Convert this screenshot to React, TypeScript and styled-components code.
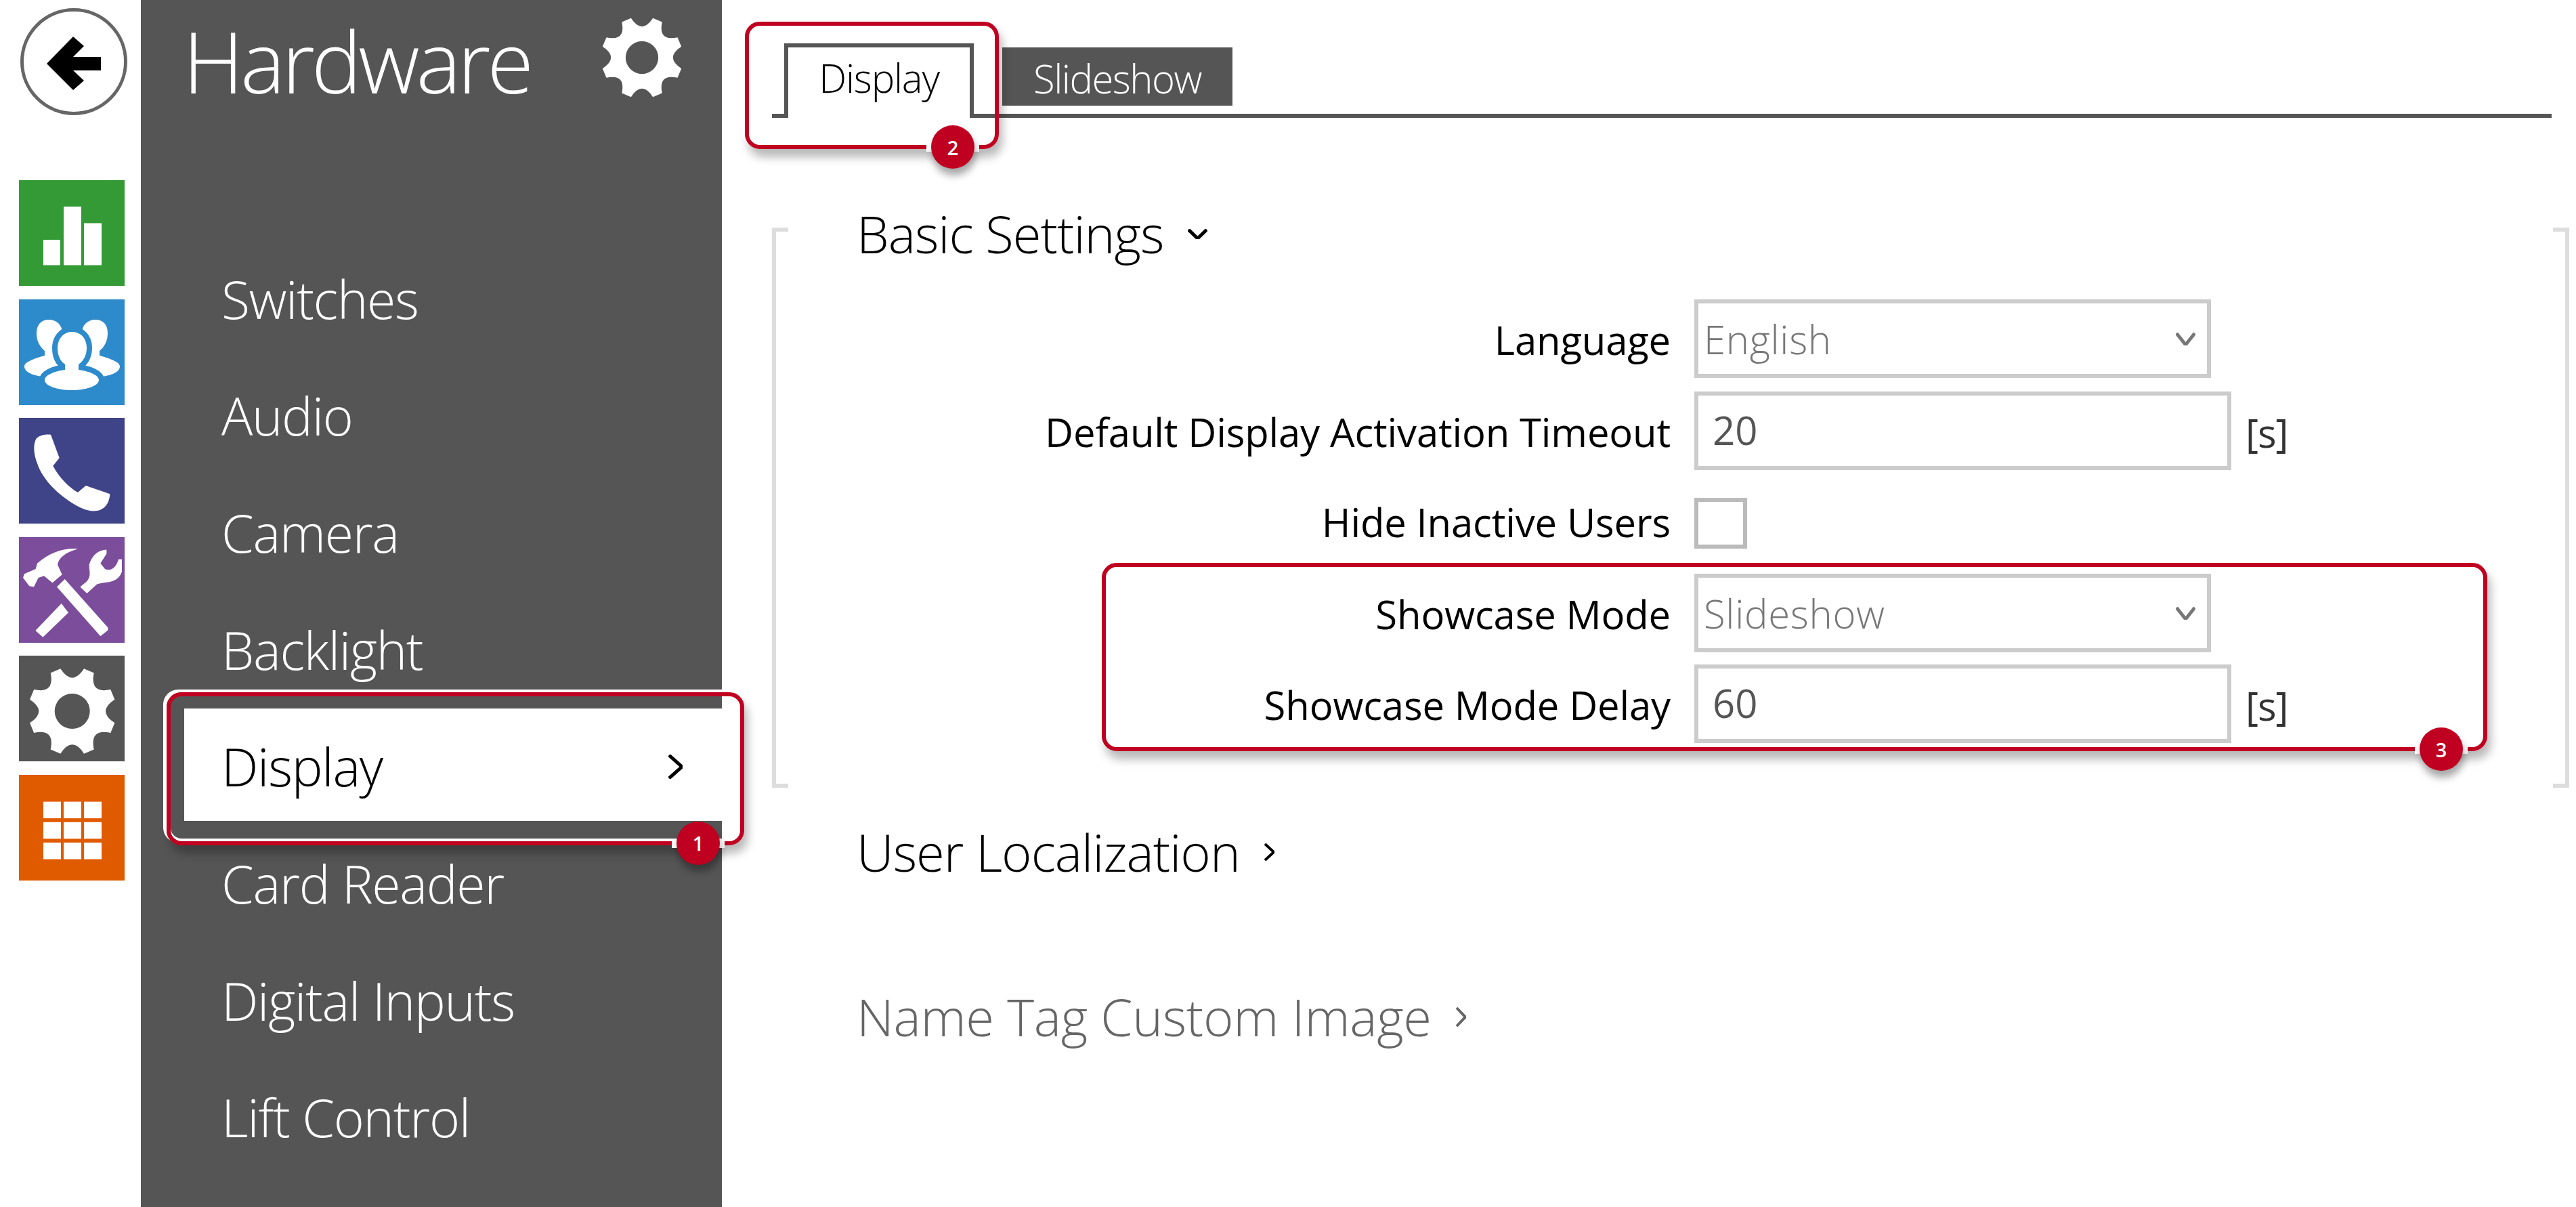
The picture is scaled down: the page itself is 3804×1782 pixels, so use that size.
import React from 'react';
import styled, { createGlobalStyle } from 'styled-components';

const GlobalStyle = createGlobalStyle`
  * { box-sizing: border-box; }
  html, body { margin: 0; padding: 0; background: #fff; }
  body { font-family: "Open Sans", "Noto Sans", sans-serif; }
`;

const Page = styled.div`
  display: flex;
  width: 3804px;
  height: 1782px;
  overflow: hidden;
`;

// left rail with the round back button and coloured tiles
const Rail = styled.nav`
  width: 208px;
  flex: none;
  padding: 12px 0 0 28px;
`;

const BackButton = styled.button`
  display: block;
  width: 158px;
  height: 158px;
  margin: 0 0 96px 2px;
  padding: 0;
  border: 5px solid #666;
  border-radius: 50%;
  background: #fff;
`;

const Tiles = styled.div`
  display: flex;
  flex-direction: column;
  gap: 19.5px;
`;

const Tile = styled.a<{ $color: string }>`
  display: block;
  width: 156px;
  height: 156px;
  background: ${(p) => p.$color};
  svg { display: block; width: 100%; height: 100%; fill: #fff; }
`;

// dark menu column
const Sidebar = styled.aside`
  width: 858px;
  flex: none;
  background: #555;
  color: #fff;
`;

const SidebarHead = styled.header`
  display: flex;
  align-items: flex-start;
  justify-content: space-between;
  height: 355px;
  padding: 20px 53px 0 62px;
`;

const Title = styled.h1`
  margin: -5px 0 0;
  font-size: 125px;
  line-height: 150px;
  font-weight: 300;
  font-stretch: 88%;
  letter-spacing: -5px;
`;

const HeadGear = styled.svg`
  display: block;
  width: 130px;
  height: 130px;
  fill: #fff;
`;

const NavList = styled.ul`
  display: flex;
  flex-direction: column;
  gap: 6.7px;
  margin: 0 0 0 64px;
  padding: 0;
  list-style: none;
`;

const NavItem = styled.li<{ $active?: boolean }>`
  position: relative;
  display: flex;
  align-items: center;
  justify-content: space-between;
  height: 166px;
  padding: 6px 58px 0 55px;
  font-size: 77px;
  font-weight: 300;
  font-stretch: 90%;
  letter-spacing: -1.3px;
  background: ${(p) => (p.$active ? '#fff' : 'transparent')};
  color: ${(p) => (p.$active ? '#000' : '#fff')};
`;

// red numbered frames lying over the page
const Callout = styled.div<{ $top: number; $right: number; $bottom: number; $left: number }>`
  position: absolute;
  z-index: 2;
  top: ${(p) => p.$top}px;
  right: ${(p) => p.$right}px;
  bottom: ${(p) => p.$bottom}px;
  left: ${(p) => p.$left}px;
  border: 6px solid #c00020;
  border-radius: 22px;
  box-shadow: -5px -4px 0 #fff, inset 0 -4px 0 #fff, 5px 12px 14px rgba(0, 0, 0, 0.28);
  pointer-events: none;
`;

const BadgeSpot = styled.div`
  position: absolute;
  right: 23px;
  bottom: -35px;
  display: flex;
  justify-content: center;
  width: 78px;
  height: 64px;
  background: linear-gradient(#fff, #fff) center / 100% 14px no-repeat;
`;

const BadgeDot = styled.span`
  display: flex;
  align-items: center;
  justify-content: center;
  width: 64px;
  height: 64px;
  border-radius: 50%;
  background: #c00020;
  color: #fff;
  font-size: 29px;
  font-weight: 600;
  letter-spacing: 0;
  box-shadow: 2px 10px 12px rgba(0, 0, 0, 0.35);
`;

// right hand content
const Main = styled.main`
  flex: 1;
  min-width: 0;
  padding: 64px 10px 0 74px;
`;

const TabBar = styled.div`
  display: flex;
  align-items: flex-start;
  gap: 42px;
  height: 110px;
  margin-right: 26px;
  padding-left: 18px;
  border-bottom: 6px solid #555;
`;

const ActiveTab = styled.div`
  position: relative;
  width: 280px;
  height: 110px;
  padding-top: 5px;
  border: 6px solid #555;
  border-bottom: 0;
  background: #fff;
  color: #000;
  font-size: 58px;
  font-weight: 300;
  font-stretch: 90%;
  letter-spacing: -1.2px;
  text-align: center;
`;

const Tab = styled.div`
  width: 340px;
  height: 86px;
  margin-top: 6px;
  background: #555;
  color: #fff;
  font-size: 58px;
  line-height: 92px;
  font-weight: 300;
  font-stretch: 90%;
  letter-spacing: -1.5px;
  text-align: center;
`;

const Frame = styled.section`
  display: flow-root;
  height: 827px;
  margin-top: 162px;
  border: solid #ddd;
  border-width: 0 6px;
  background:
    linear-gradient(#ddd, #ddd) left top / 18px 6px no-repeat,
    linear-gradient(#ddd, #ddd) right top / 18px 6px no-repeat,
    linear-gradient(#ddd, #ddd) left bottom / 18px 6px no-repeat,
    linear-gradient(#ddd, #ddd) right bottom / 18px 6px no-repeat;
`;

const SectionHead = styled.h2<{ $muted?: boolean }>`
  display: flex;
  align-items: center;
  gap: 36px;
  margin: 0;
  font-size: 76px;
  line-height: 90px;
  font-weight: 300;
  font-stretch: 90%;
  letter-spacing: ${(p) => (p.$muted ? '-0.3px' : '-1px')};
  color: ${(p) => (p.$muted ? '#666' : '#000')};
`;

const FrameHead = styled(SectionHead)`
  margin: -36px 0 52px 119px;
`;

const OuterHead = styled(SectionHead)<{ $top: number }>`
  margin: ${(p) => p.$top}px 0 0 125px;
`;

const FormRow = styled.div<{ $top?: number }>`
  display: flex;
  align-items: center;
  margin-top: ${(p) => p.$top || 0}px;
`;

const Label = styled.label<{ $raised?: boolean }>`
  width: 1321px;
  margin-right: 35px;
  padding: ${(p) => (p.$raised ? '0 0 4px' : '4px 0 0')};
  color: #000;
  font-size: 58px;
  line-height: 70px;
  font-stretch: 90%;
  letter-spacing: -0.15px;
  text-align: right;
`;

const SelectBox = styled.div`
  display: flex;
  align-items: center;
  justify-content: space-between;
  width: 763px;
  height: 116px;
  padding: 0 17px 0 8px;
  border: 6px solid #ccc;
  color: #777;
  font-size: 58px;
  font-weight: 300;
  font-stretch: 90%;
  letter-spacing: 0.7px;
`;

const NumberInput = styled.input`
  width: 793px;
  height: 116px;
  padding: 0 20px 4px 21px;
  border: 6px solid #ccc;
  border-radius: 0;
  outline: none;
  color: #555;
  font-family: inherit;
  font-size: 58px;
  font-stretch: 90%;
`;

const Unit = styled.span`
  margin-left: 21px;
  padding-top: 6px;
  color: #333;
  font-size: 58px;
  line-height: 70px;
  font-stretch: 90%;
  letter-spacing: -1px;
`;

const CheckBox = styled.input`
  appearance: none;
  display: block;
  width: 78px;
  height: 75px;
  margin: 0;
  border: 6px solid #bbb;
  background: #fff;
`;

const HighlightGroup = styled.div`
  position: relative;
  margin-top: 37px;
`;

const ChevronSvg = styled.svg`
  flex: none;
  fill: none;
  stroke: currentColor;
`;

function Chevron({ w, h, sw, down }: { w: number; h: number; sw: number; down?: boolean }) {
  const d = down ? `M1 1 L${w / 2} ${h - 1} L${w - 1} 1` : `M1 1 L${w - 1} ${h / 2} L1 ${h - 1}`;
  return (
    <ChevronSvg width={w} height={h} viewBox={`0 0 ${w} ${h}`} strokeWidth={sw}>
      <path d={d} />
    </ChevronSvg>
  );
}

// gear outline, centred on 0,0 with 8 flared teeth
function gearPath(R: number, valley: number) {
  const pt = (deg: number, r: number) => {
    const a = ((deg - 90) * Math.PI) / 180;
    return `${(Math.cos(a) * r).toFixed(2)} ${(Math.sin(a) * r).toFixed(2)}`;
  };
  let d = '';
  for (let i = 0; i < 8; i++) {
    const c = 22.5 + i * 45;
    d += `${i === 0 ? 'M' : 'L'}${pt(c - 7, R)} L${pt(c + 7, R)} Q${pt(c + 22.5, valley)} ${pt(c + 38, R)} `;
  }
  return d + 'Z';
}

function Gear() {
  return (
    <>
      <path d={gearPath(65, 36)} />
      <circle r="26" fill="currentColor" />
    </>
  );
}

const GearTile = styled(Tile)`
  color: ${(p) => p.$color};
`;

const HeadGearWrap = styled.span`
  color: #555;
  line-height: 0;
`;

const squares = [36, 66, 96];
const rows = [39.6, 69.8, 100];

const navItems = ['Switches', 'Audio', 'Camera', 'Backlight', 'Display', 'Card Reader', 'Digital Inputs', 'Lift Control'];

export default function App() {
  return (
    <Page>
      <GlobalStyle />
      <Rail>
        <BackButton aria-label="Back">
          <svg width="148" height="148" viewBox="35 17 148 148">
            <path d="M69 94 L108 54 L124 68 L108 84 L149 84 L149 104 L108 104 L124 119 L108 133 Z" />
          </svg>
        </BackButton>
        <Tiles>
          <Tile $color="#349a35">
            <svg viewBox="0 0 156 156">
              <rect x="36" y="88" width="25" height="37.5" />
              <rect x="66" y="39" width="26" height="86.5" />
              <rect x="96" y="63.5" width="26" height="62" />
            </svg>
          </Tile>
          <Tile $color="#2e8bcb">
            <svg viewBox="0 0 156 156">
              <path d="M44 30 C56 30 64 38 64 50 L70 100 C70 108 60 114 40 114 C24 114 8 108 8 99 C8 92 24 87 38 83 L38 76 C31 70 26 62 26 50 C26 38 32 30 44 30 Z" />
              <path d="M113 30 C101 30 93 38 93 50 L87 100 C87 108 97 114 117 114 C133 114 149 108 149 99 C149 92 133 87 119 83 L119 76 C126 70 131 62 131 50 C131 38 125 30 113 30 Z" />
              <path
                d="M78 48 C92 48 100 58 100 72 C100 84 94 92 88 96 L88 104 C104 106 118 112 118 119 C118 128 98 134 78 134 C58 134 38 128 38 119 C38 112 52 106 68 104 L68 96 C62 92 57 84 57 72 C57 58 66 48 78 48 Z"
                stroke="#2e8bcb"
                strokeWidth="16"
                paintOrder="stroke"
              />
            </svg>
          </Tile>
          <Tile $color="#3f4387">
            <svg viewBox="24 48 468 468">
              <path d="M100 140 C115 125 140 120 165 122 L203 225 L175 260 C200 310 245 355 285 378 L320 348 L427 385 C425 420 410 445 385 455 C345 470 300 450 260 425 C180 375 125 310 105 250 C90 210 85 170 100 140 Z" />
            </svg>
          </Tile>
          <Tile $color="#7b4d9b">
            <svg viewBox="84 225 468 382" preserveAspectRatio="none">
              <path d="M345 268 C290 262 220 280 165 320 L158 340 L108 358 L102 372 L130 402 L150 405 L170 372 L195 365 L232 390 L275 360 L255 325 C260 300 290 280 345 268 Z" />
              <path d="M287 377 L478 552 L478 562 L445 583 L252 405 Z" />
              <path d="M272 465 L303 498 L190 587 L157 563 Z" />
              <path d="M355 405 L385 428 L430 395 C470 385 520 395 540 350 L540 305 L525 305 C515 335 490 350 465 340 L445 320 L472 285 L472 270 C440 270 405 290 395 325 C395 350 405 365 385 385 Z" />
            </svg>
          </Tile>
          <GearTile $color="#555">
            <svg viewBox="-78.7 -82 156 156">
              <Gear />
            </svg>
          </GearTile>
          <Tile $color="#e05a00">
            <svg viewBox="0 0 156 156">
              {rows.map((y) =>
                squares.map((x) => <rect key={`${x}-${y}`} x={x} y={y} width="26" height="24.5" />)
              )}
            </svg>
          </Tile>
        </Tiles>
      </Rail>

      <Sidebar>
        <SidebarHead>
          <Title>Hardware</Title>
          <HeadGearWrap>
            <HeadGear viewBox="-70 -70 140 140">
              <Gear />
            </HeadGear>
          </HeadGearWrap>
        </SidebarHead>
        <NavList>
          {navItems.map((name) => (
            <NavItem key={name} $active={name === 'Display'}>
              {name}
              {name === 'Display' && (
                <>
                  <Chevron w={21} h={36} sw={5} />
                  <Callout $top={-24} $right={-33} $bottom={-36} $left={-26}>
                    <BadgeSpot>
                      <BadgeDot>1</BadgeDot>
                    </BadgeSpot>
                  </Callout>
                </>
              )}
            </NavItem>
          ))}
        </NavList>
      </Sidebar>

      <Main>
        <TabBar>
          <ActiveTab>
            Display
            <Callout $top={-38} $right={-43} $bottom={-46} $left={-64}>
              <BadgeSpot>
                <BadgeDot>2</BadgeDot>
              </BadgeSpot>
            </Callout>
          </ActiveTab>
          <Tab>Slideshow</Tab>
        </TabBar>

        <Frame>
          <FrameHead>
            Basic Settings
            <Chevron w={29} h={15} sw={5} down />
          </FrameHead>
          <FormRow>
            <Label>Language</Label>
            <SelectBox>
              English
              <Chevron w={29} h={19} sw={5} down />
            </SelectBox>
          </FormRow>
          <FormRow $top={20}>
            <Label>Default Display Activation Timeout</Label>
            <NumberInput defaultValue="20" />
            <Unit>[s]</Unit>
          </FormRow>
          <FormRow $top={41}>
            <Label $raised>Hide Inactive Users</Label>
            <CheckBox type="checkbox" />
          </FormRow>
          <HighlightGroup>
            <FormRow>
              <Label>Showcase Mode</Label>
              <SelectBox>
                Slideshow
                <Chevron w={29} h={19} sw={5} down />
              </SelectBox>
            </FormRow>
            <FormRow $top={18}>
              <Label>Showcase Mode Delay</Label>
              <NumberInput defaultValue="60" />
              <Unit>[s]</Unit>
            </FormRow>
            <Callout $top={-16} $right={115} $bottom={-12} $left={481}>
              <BadgeSpot>
                <BadgeDot>3</BadgeDot>
              </BadgeSpot>
            </Callout>
          </HighlightGroup>
        </Frame>

        <OuterHead $top={50}>
          User Localization
          <Chevron w={15} h={26} sw={4} />
        </OuterHead>
        <OuterHead $top={153} $muted>
          Name Tag Custom Image
          <Chevron w={15} h={29} sw={4} />
        </OuterHead>
      </Main>
    </Page>
  );
}
